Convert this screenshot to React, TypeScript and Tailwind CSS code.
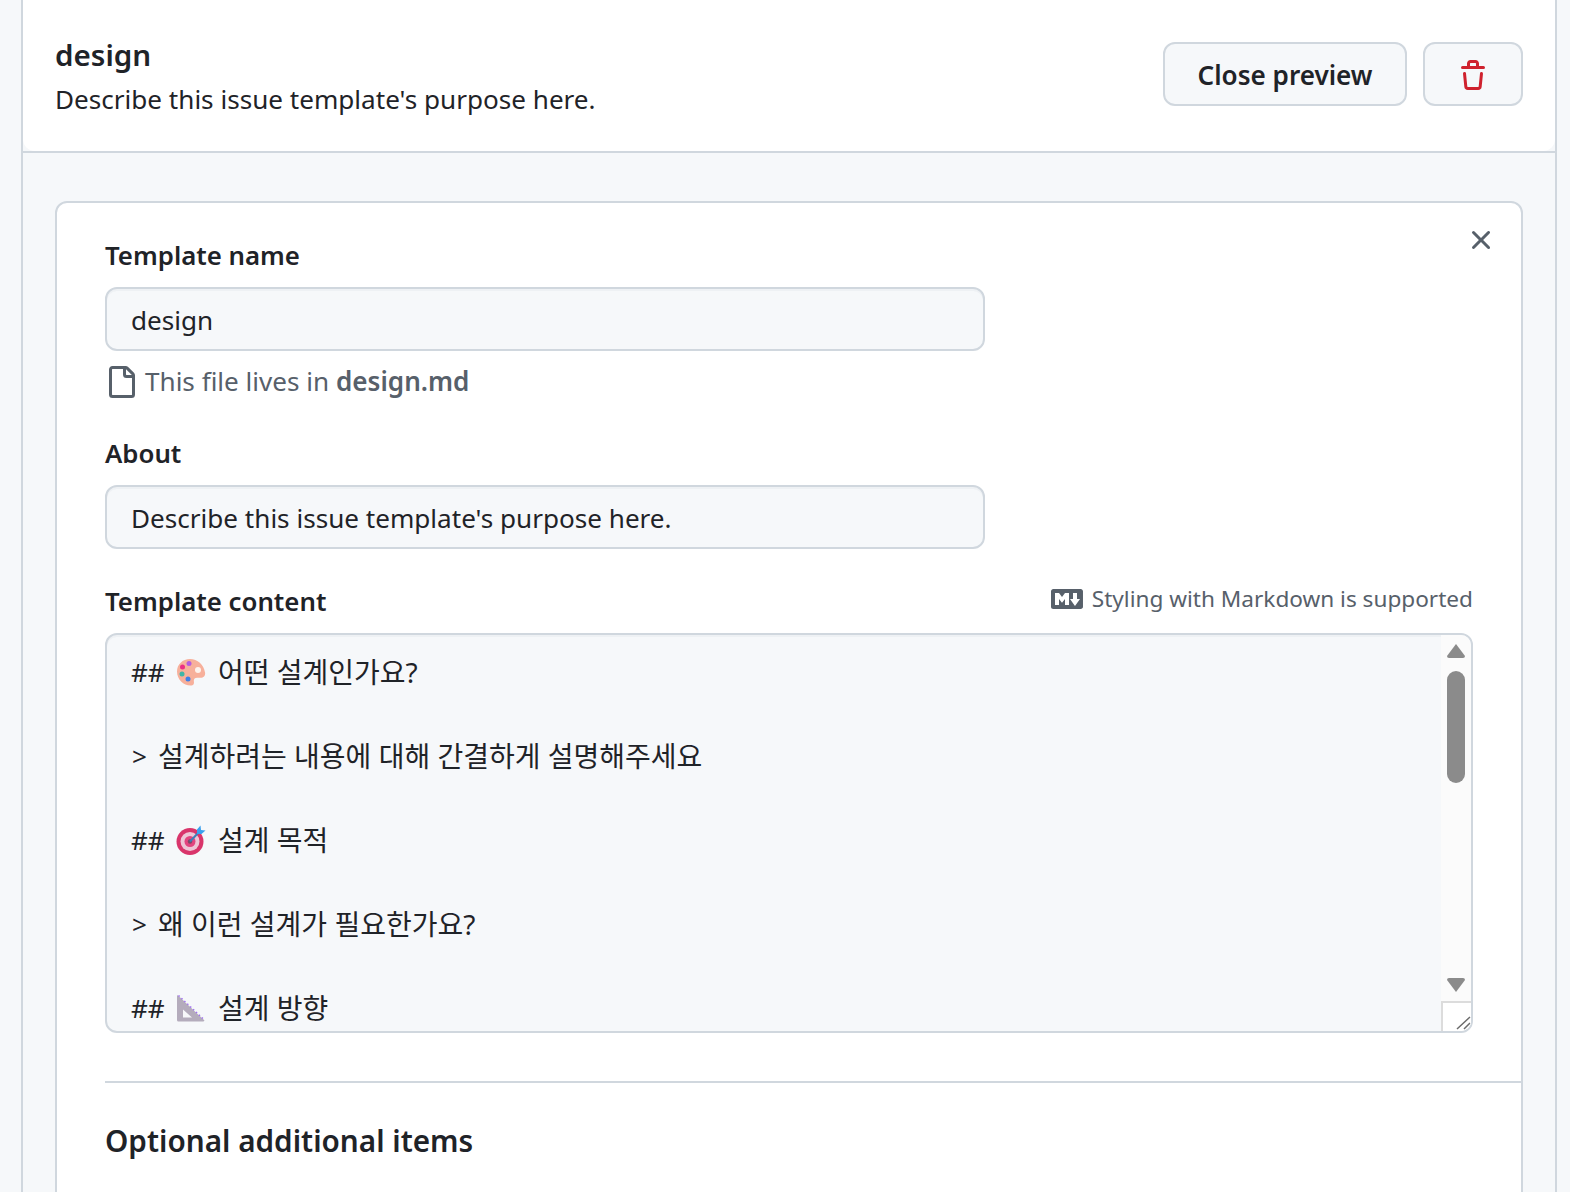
import React from "react";

const LATIN = "font-['Noto_Sans','Noto_Sans_CJK_KR',sans-serif]";

function Palette() {
  return (
    <svg width="30" height="28" viewBox="0 0 30 28" className="shrink-0">
      <path d="M14 1C6.5 1 1 6.5 1 13.5 1 21.5 7.5 27.5 14.5 27.5c3 0 3.8-1.8 3.4-3.8-.5-2.4.8-4 3.2-4h3.4c3 0 5-2 4.6-5C27.700 6.500 21.500 1 14 1Z" fill="#f7b09b" />
      <circle cx="22" cy="12" r="3" fill="#fdf3ee" />
      <circle cx="13" cy="5.500" r="2.500" fill="#b45be0" />
      <circle cx="6.500" cy="9" r="2.500" fill="#ec2f85" />
      <circle cx="6" cy="16" r="2.500" fill="#3fb6a8" />
      <circle cx="12" cy="21" r="2.500" fill="#3f7fe8" />
    </svg>
  );
}

function Target() {
  return (
    <svg width="30" height="30" viewBox="0 0 30 30" className="shrink-0">
      <circle cx="14" cy="16.500" r="13.500" fill="#d9356b" />
      <circle cx="14" cy="16.500" r="9.500" fill="#eec6d6" />
      <circle cx="14" cy="16.500" r="5.500" fill="#e2457f" />
      <circle cx="14" cy="16.500" r="2.200" fill="#7a4a66" />
      <path d="M14 16.500 24 6" stroke="#3c7fb8" strokeWidth="2" />
      <path d="M21 4.500 24.500 0.500 25 5 29.500 5.500 25.500 9 21 9Z" fill="#3aa0ee" />
    </svg>
  );
}

function Ruler() {
  return (
    <svg width="30" height="28" viewBox="0 0 30 28" className="shrink-0">
      <path d="M1.500 1 28.500 26.500 27.500 27.500H2.500A1.500 1.500 0 0 1 1 26V1.500Z" fill="#b4acbc" />
      <path d="M7 15.500 16 23.500H7Z" fill="#f7f8fa" />
      <path d="M2.500 1.500 28.500 26" stroke="#a070f0" strokeWidth="1.500" strokeDasharray="1.500 2.500" fill="none" />
    </svg>
  );
}

function Label({ children }: { children: React.ReactNode }) {
  return <div className="text-[25.8px] leading-[40px] font-semibold text-[#1f2328]">{children}</div>;
}

function Field({ value }: { value: string }) {
  return (
    <div className="w-[880px] h-[64px] flex items-center px-[24px] pt-[4px] bg-[#f6f8fa] border-2 border-[#d0d7de] rounded-[12px] shadow-[inset_0_2px_0_rgba(208,215,222,0.2)] text-[26.1px] text-[#1f2328]">
      {value}
    </div>
  );
}

function Line({ icon, children }: { icon?: React.ReactNode; children: React.ReactNode }) {
  return (
    <div className="h-[84px] flex items-start text-[28px] leading-[42px] text-[#1f2328] whitespace-nowrap">
      {icon ? (
        <span className="flex items-center h-[42px]">
          <span className="w-[45px] text-[26.1px]">##</span>
          {icon}
          <span className="ml-[12px]">{children}</span>
        </span>
      ) : (
        <span className="flex items-center h-[42px]">
          <span className="w-[27px] pl-px text-[26.1px]">&gt;</span>
          <span>{children}</span>
        </span>
      )}
    </div>
  );
}

export default function App() {
  return (
    <div className={`${LATIN} w-[1570px] h-[1192px] overflow-hidden bg-[#f6f8fa] pl-[21px]`}>
      <div className="w-[1536px] h-[1192px] border-x-2 border-[#d0d7de] bg-[#f6f8fa]">
        <div className="border-b-2 border-[#d0d7de]">
          <div className="h-[151px] bg-white rounded-b-[12px] pl-[32px] pr-[32px] flex justify-between">
            <div className="pt-[33px]">
              <div className="text-[29.6px] leading-[44px] font-semibold text-[#1f2328]">design</div>
              <div className="mt-px text-[26.1px] leading-[42px] text-[#1f2328]">Describe this issue template's purpose here.</div>
            </div>
            <div className="pt-[42px] flex gap-[16px]">
              <button className="w-[244px] h-[64px] pt-[3px] bg-[#f6f8fa] border-2 border-[#d0d7de] rounded-[12px] text-[26.1px] font-semibold text-[#1f2328]">
                Close preview
              </button>
              <button className="w-[100px] h-[64px] pt-[4px] bg-[#f6f8fa] border-2 border-[#d0d7de] rounded-[12px] flex items-center justify-center">
                <svg width="32" height="32" viewBox="0 0 16 16" fill="#cf222e">
                  <path d="M11 1.75V3h2.250a.75.75 0 0 1 0 1.500H2.750a.75.75 0 0 1 0-1.500H5V1.750C5 .784 5.784 0 6.750 0h2.500C10.216 0 11 .784 11 1.750ZM4.496 6.675l.66 6.600a.25.25 0 0 0 .249.225h5.190a.25.25 0 0 0 .249-.225l.66-6.600a.75.75 0 0 1 1.492.149l-.66 6.600A1.748 1.748 0 0 1 10.595 15h-5.190a1.750 1.750 0 0 1-1.741-1.575l-.66-6.600a.75.75 0 1 1 1.492-.150ZM6.500 1.750V3h3V1.750a.25.25 0 0 0-.25-.25h-2.500a.25.25 0 0 0-.25.25Z" />
                </svg>
              </button>
            </div>
          </div>
        </div>

        <div className="pt-[48px] pl-[32px] pr-[32px]">
          <div className="relative h-[1100px] bg-white border-2 border-[#d0d7de] rounded-[12px] pl-[48px] pr-[48px] pt-[32px]">
            <svg className="absolute top-[21px] right-[24px]" width="32" height="32" viewBox="0 0 16 16" fill="#57606a">
              <path d="M3.720 3.720a.75.75 0 0 1 1.060 0L8 6.940l3.220-3.220a.749.749 0 0 1 1.275.326.749.749 0 0 1-.215.734L9.060 8l3.220 3.220a.749.749 0 0 1-.326 1.275.749.749 0 0 1-.734-.215L8 9.060l-3.220 3.220a.751.751 0 0 1-1.042-.018.751.751 0 0 1-.018-1.042L6.940 8 3.720 4.780a.75.75 0 0 1 0-1.060Z" />
            </svg>

            <Label>Template name</Label>
            <div className="mt-[12px]"><Field value="design" /></div>
            <div className="mt-[10px] flex items-center h-[42px] text-[26.1px] text-[#57606a]">
              <svg className="shrink-0 ml-0 mr-[8px]" width="32" height="32" viewBox="0 0 16 16" fill="#57606a">
                <path d="M2 1.750C2 .784 2.784 0 3.750 0h6.586c.464 0 .909.184 1.237.513l2.914 2.914c.329.328.513.773.513 1.237v9.586A1.750 1.750 0 0 1 13.250 16h-9.500A1.750 1.750 0 0 1 2 14.250Zm1.750-.25a.25.25 0 0 0-.25.25v12.500c0 .138.112.25.25.25h9.500a.25.25 0 0 0 .25-.25V6h-2.750A1.750 1.750 0 0 1 9 4.250V1.500Zm6.750.062V4.250c0 .138.112.25.25.25h2.688l-.011-.013-2.914-2.914-.013-.011Z" />
              </svg>
              <span>
                This file lives in <strong className="font-semibold">design.md</strong>
              </span>
            </div>

            <div className="mt-[30px]"><Label>About</Label></div>
            <div className="mt-[12px]"><Field value="Describe this issue template's purpose here." /></div>

            <div className="mt-[31px] flex items-center justify-between h-[42px]">
              <Label>Template content</Label>
              <div className="flex items-center text-[22.6px] text-[#57606a] -mt-[4px]">
                <svg className="shrink-0 mr-[9px]" width="32" height="32" viewBox="0 0 16 16" fill="#57606a">
                  <path d="M14.850 3c.63 0 1.150.52 1.140 1.150v7.700c0 .63-.51 1.150-1.150 1.150H1.150C.52 13 0 12.490 0 11.850v-7.700C0 3.520.52 3 1.150 3ZM9 11V5H7L5.500 7 4 5H2v6h2V8l1.500 1.920L7 8v3Zm2.990.5L14.500 8H13V5h-2v3H9.500Z" />
                </svg>
                <span>Styling with Markdown is supported</span>
              </div>
            </div>

            <div className="mt-[11px] h-[400px] flex bg-[#f6f8fa] border-2 border-[#d0d7de] rounded-[12px] overflow-hidden shadow-[inset_0_2px_0_rgba(208,215,222,0.2)]">
              <div className="flex-1 min-w-0 pl-[24px] pt-[16px] overflow-hidden">
                <Line icon={<Palette />}>어떤 설계인가요?</Line>
                <Line>설계하려는 내용에 대해 간결하게 설명해주세요</Line>
                <Line icon={<Target />}>설계 목적</Line>
                <Line>왜 이런 설계가 필요한가요?</Line>
                <Line icon={<Ruler />}>설계 방향</Line>
              </div>
              <div className="w-[30px] shrink-0 flex flex-col bg-[#fbfbfb]">
                <div className="flex-1 flex flex-col items-center pt-[9px]">
                  <svg width="18" height="14" viewBox="0 0 18 14" fill="#8b8b8b">
                    <path d="M9 0 18 12Q18 14 16 14H2Q0 14 0 12Z" />
                  </svg>
                  <div className="mt-[13px] w-[18px] h-[112px] rounded-[9px] bg-[#8b8b8b]" />
                  <svg className="mt-[195px]" width="18" height="14" viewBox="0 0 18 14" fill="#8b8b8b">
                    <path d="M2 0H16Q18 0 18 2L9 14 0 2Q0 0 2 0Z" />
                  </svg>
                </div>
                <div className="h-[30px] bg-white border-l-2 border-t-2 border-[#dcdcdc] flex items-end justify-end">
                  <svg width="16" height="16" viewBox="0 0 16 16" stroke="#6b6b6b" strokeWidth="1.500">
                    <path d="M2 14 15 2M9 14 15 8" />
                  </svg>
                </div>
              </div>
            </div>

            <div className="mt-[48px] -mr-[48px] border-t-2 border-[#d0d7de]" />
            <div className="mt-[34px] text-[29.7px] leading-[48px] font-semibold text-[#1f2328]">Optional additional items</div>
          </div>
        </div>
      </div>
    </div>
  );
}
